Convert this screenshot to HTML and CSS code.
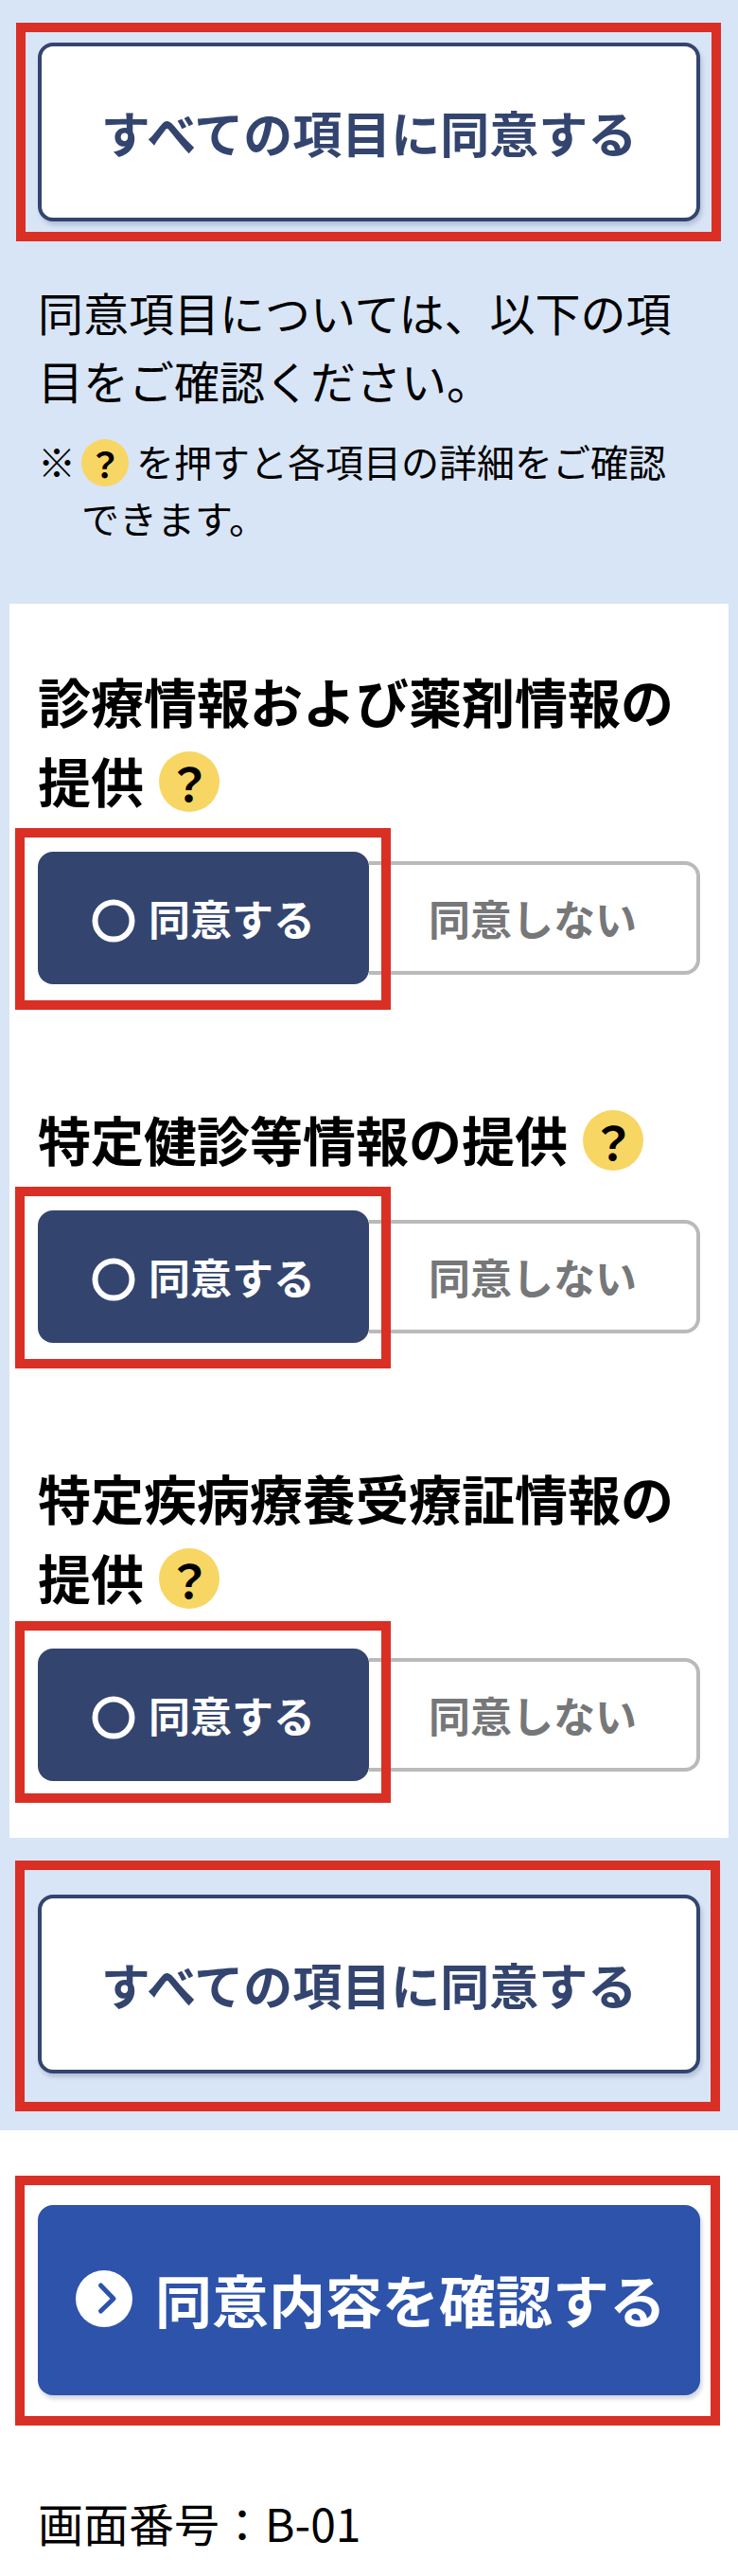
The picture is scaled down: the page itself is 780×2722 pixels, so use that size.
FILE: index.html
```html
<!DOCTYPE html>
<html lang="ja">
<head>
    <meta charset="UTF-8" />
    <meta name="viewport" content="width=device-width, initial-scale=1.0" />
    <title>同意項目の確認</title>
    <link rel="stylesheet" href="styles.css">
</head>
<body>
    <form>
        <div class="consent">
            <div class="row">
                <button type="button" class="btn-all">すべての項目に同意する</button>
                <span class="mark mark-tight"></span>
            </div>

            <p class="lead">同意項目については、以下の項目をご確認ください。</p>
            <div class="note">
                <span>※</span>
                <p><button type="button" class="help help-small">？</button>を押すと各項目の詳細をご確認できます。</p>
            </div>

            <div class="panel">
                <section class="item">
                    <h2>診療情報および薬剤情報の提供<button type="button" class="help">？</button></h2>
                    <div class="choice">
                        <div class="yes">
                            <input type="radio" name="medical" id="medical-yes" checked />
                            <label for="medical-yes">
                                <svg class="ring" viewBox="0 0 46 52"><circle cx="23" cy="29" r="19.5" /></svg>
                                同意する
                            </label>
                            <span class="mark mark-choice"></span>
                        </div>
                        <div class="no">
                            <input type="radio" name="medical" id="medical-no" />
                            <label for="medical-no">同意しない</label>
                        </div>
                    </div>
                </section>

                <section class="item">
                    <h2>特定健診等情報の提供<button type="button" class="help">？</button></h2>
                    <div class="choice">
                        <div class="yes">
                            <input type="radio" name="checkup" id="checkup-yes" checked />
                            <label for="checkup-yes">
                                <svg class="ring" viewBox="0 0 46 52"><circle cx="23" cy="29" r="19.5" /></svg>
                                同意する
                            </label>
                            <span class="mark mark-choice"></span>
                        </div>
                        <div class="no">
                            <input type="radio" name="checkup" id="checkup-no" />
                            <label for="checkup-no">同意しない</label>
                        </div>
                    </div>
                </section>

                <section class="item">
                    <h2>特定疾病療養受療証情報の提供<button type="button" class="help">？</button></h2>
                    <div class="choice">
                        <div class="yes">
                            <input type="radio" name="disease" id="disease-yes" checked />
                            <label for="disease-yes">
                                <svg class="ring" viewBox="0 0 46 52"><circle cx="23" cy="29" r="19.5" /></svg>
                                同意する
                            </label>
                            <span class="mark mark-choice mark-raised"></span>
                        </div>
                        <div class="no">
                            <input type="radio" name="disease" id="disease-no" />
                            <label for="disease-no">同意しない</label>
                        </div>
                    </div>
                </section>
            </div>

            <div class="row">
                <button type="button" class="btn-all">すべての項目に同意する</button>
                <span class="mark"></span>
            </div>
        </div>

        <div class="row submit-row">
            <button type="submit" class="btn-submit">
                <svg class="arrow" viewBox="0 0 60 60">
                    <circle cx="30" cy="30" r="30" />
                    <path d="M26.5 16 L40 30 L26.5 43" />
                </svg>
                同意内容を確認する
            </button>
            <span class="mark mark-submit"></span>
        </div>
    </form>

    <footer>画面番号：B-01</footer>
</body>
</html>
```

FILE: styles.css
```css
* {
    margin: 0;
    padding: 0;
    box-sizing: border-box;
}

body {
    background-color: #fff;
    color: #000;
    font-family: "Noto Sans CJK JP", sans-serif;
    font-size: 48px;
    line-height: 72px;
}

button {
    font-family: inherit;
    cursor: pointer;
}

.consent {
    background-color: #d8e5f6;
    padding: 45px 0 60px;
}

.row {
    position: relative;
    display: flex;
    padding: 0 40px;
}

.btn-all {
    flex: 1;
    height: 189px;
    border: 4px solid #33456f;
    border-radius: 16px;
    background-color: #fff;
    box-shadow: 2px 4px 4px rgba(40, 50, 100, 0.2);
    color: #33456f;
    font-size: 52px;
    font-weight: bold;
}

/* 操作箇所を示す赤枠 */
.mark {
    position: absolute;
    inset: -36px 19px -40px 16px;
    border: 10px solid #d92f25;
    pointer-events: none;
    z-index: 2;
}

.mark-tight {
    inset: -21px 18px -21px 17px;
}

.mark-choice {
    inset: -25px -23px -27px -24px;
}

.mark-raised {
    top: -29px;
    bottom: -23px;
}

.mark-submit {
    top: -31px;
    bottom: -32px;
}

.lead {
    margin: 59px 40px 20px;
}

.note {
    display: flex;
    gap: 6px;
    margin: 0 40px 61px;
    font-size: 40px;
    line-height: 60px;
}

.help {
    display: inline-flex;
    align-items: center;
    justify-content: center;
    width: 64px;
    height: 64px;
    margin: 12px 0 0 16px;
    border: 0;
    border-radius: 50%;
    background-color: #f8d664;
    color: #000;
    font-size: 48px;
    font-weight: bold;
    line-height: 1;
    vertical-align: top;
}

.help-small {
    width: 50px;
    height: 50px;
    margin: 7px 8px 0 0;
    font-size: 36px;
}

.panel {
    display: flex;
    flex-direction: column;
    gap: 121px;
    margin: 0 10px 60px;
    padding: 60px 30px;
    background-color: #fff;
}

.item h2 {
    margin-bottom: 34px;
    font-size: 56px;
    font-weight: bold;
    line-height: 84px;
}

.choice {
    display: flex;
    align-items: center;
    font-size: 44px;
    font-weight: bold;
}

.choice input {
    position: absolute;
    opacity: 0;
}

.yes,
.no {
    position: relative;
    flex: 1;
}

.yes {
    z-index: 1;
}

.choice label {
    display: flex;
    align-items: center;
    justify-content: center;
    gap: 14px;
    cursor: pointer;
}

.yes label {
    height: 140px;
    border-radius: 16px;
    background-color: #33456f;
    color: #fff;
}

.no label {
    height: 120px;
    border: 4px solid #bababa;
    border-left: 0;
    border-radius: 0 16px 16px 0;
    color: #767779;
}

.ring {
    width: 46px;
    height: 52px;
    fill: none;
    stroke: #fff;
    stroke-width: 6;
}

.submit-row {
    margin-top: 79px;
}

.btn-submit {
    flex: 1;
    display: flex;
    align-items: center;
    justify-content: center;
    gap: 24px;
    height: 201px;
    padding: 0 0 4px 4px;
    border: 0;
    border-radius: 16px;
    background-color: #2d53ab;
    box-shadow: 2px 4px 4px rgba(40, 50, 100, 0.2);
    color: #fff;
    font-size: 60px;
    font-weight: bold;
}

.arrow {
    width: 60px;
    height: 60px;
    fill: #fff;
}

.arrow path {
    fill: none;
    stroke: #2d53ab;
    stroke-width: 5;
    stroke-linecap: round;
    stroke-linejoin: round;
}

footer {
    padding: 98px 40px 20px;
}
```
